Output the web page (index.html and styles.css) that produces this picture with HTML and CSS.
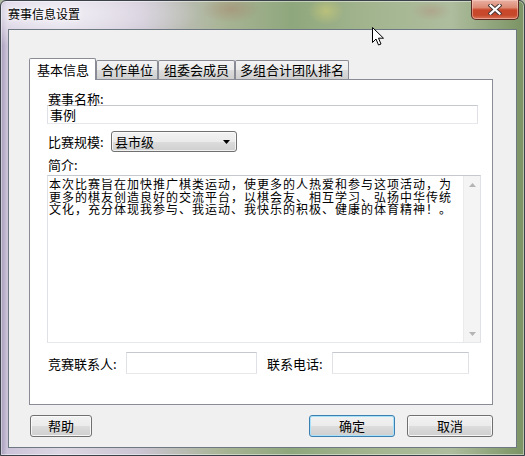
FILE: index.html
```html
<!DOCTYPE html>
<html lang="zh-CN">
<head>
<meta charset="utf-8">
<title>赛事信息设置</title>
<link rel="stylesheet" href="styles.css">
</head>
<body>
<div class="window">
  <div class="titlebar">
    <span class="title">赛事信息设置</span>
    <div class="close-btn">
      <svg width="14" height="11" viewBox="0 0 14 11">
        <path d="M2.5 1.5 L11.5 9.5 M11.5 1.5 L2.5 9.5" stroke="#4b3a36" stroke-width="4.2" stroke-linecap="square" fill="none"/>
        <path d="M2.5 1.5 L11.5 9.5 M11.5 1.5 L2.5 9.5" stroke="#ffffff" stroke-width="2.2" stroke-linecap="square" fill="none"/>
      </svg>
    </div>
  </div>
  <div class="client">
    <div class="tabs">
      <div class="tab active">基本信息</div>
      <div class="tab">合作单位</div>
      <div class="tab tab-mid">组委会成员</div>
      <div class="tab">多组合计团队排名</div>
    </div>
    <div class="panel">
      <div class="label first-label">赛事名称:</div>
      <div class="textbox name-box">事例</div>
      <div class="scale-row">
        <span class="scale-label">比赛规模:</span>
        <div class="combo">
          <span class="combo-text">县市级</span>
          <svg class="combo-arrow" width="7" height="4" viewBox="0 0 7 4"><path d="M0 0 H7 L3.5 4 Z" fill="#000"/></svg>
        </div>
      </div>
      <div class="label intro-label">简介:</div>
      <div class="memo">
        <div class="memo-text">
          <div>本次比赛旨在加快推广棋类运动，使更多的人热爱和参与这项活动，为</div>
          <div>更多的棋友创造良好的交流平台，以棋会友、相互学习、弘扬中华传统</div>
          <div>文化，充分体现我参与、我运动、我快乐的积极、健康的体育精神！。</div>
        </div>
        <div class="vscroll">
          <div class="sb-btn"><svg width="7" height="4" viewBox="0 0 7 4"><path d="M0 4 H7 L3.5 0 Z" fill="#b4b4b4"/></svg></div>
          <div class="sb-track"></div>
          <div class="sb-btn"><svg width="7" height="4" viewBox="0 0 7 4"><path d="M0 0 H7 L3.5 4 Z" fill="#b4b4b4"/></svg></div>
        </div>
      </div>
      <div class="contact-row">
        <span class="contact-label">竞赛联系人:</span>
        <div class="textbox contact-box"></div>
        <span class="phone-label">联系电话:</span>
        <div class="textbox phone-box"></div>
      </div>
    </div>
    <div class="buttons">
      <div class="btn help-btn">帮助</div>
      <div class="btn ok-btn">确定</div>
      <div class="btn cancel-btn">取消</div>
    </div>
  </div>
  <svg class="cursor" width="13" height="20" viewBox="0 0 13 20">
    <path d="M0.5 0.5 L0.5 15.5 L4 12 L6.5 18 L9 17 L6.5 11.2 L11.5 11.2 Z" fill="#ffffff" stroke="#000000" stroke-width="1" stroke-linejoin="miter"/>
  </svg>
</div>
</body>
</html>
```
FILE: styles.css
```css
* {
  box-sizing: border-box;
}

html,
body {
  margin: 0;
  padding: 0;
}

body {
  width: 525px;
  height: 456px;
  overflow: hidden;
  background: #aeb79f;
  font-family: "Noto Sans CJK SC", "Liberation Sans", sans-serif;
  font-size: 13px;
  color: #000;
}

.window {
  position: relative;
  width: 525px;
  height: 456px;
  border: 1px solid #3b4149;
  border-radius: 6px 6px 0 0;
  padding: 0 7px 7px;
  display: flex;
  flex-direction: column;
  box-shadow: inset 0 0 0 1px rgba(255, 255, 255, 0.45);
  background:
    radial-gradient(ellipse 150px 34px at 50px 12px, rgba(244, 241, 248, 0.95), rgba(244, 241, 248, 0) 100%),
    radial-gradient(ellipse 30px 14px at 230px 8px, rgba(170, 110, 90, 0.35), rgba(170, 110, 90, 0) 100%),
    radial-gradient(ellipse 18px 14px at 325px 10px, rgba(225, 215, 110, 0.45), rgba(225, 215, 110, 0) 100%),
    radial-gradient(ellipse 20px 10px at 430px 10px, rgba(180, 120, 110, 0.3), rgba(180, 120, 110, 0) 100%),
    linear-gradient(90deg, #a59cbb 0px, #cbc3d8 6px, #dcd7e3 60px, #cbc4d2 140px, #a9b596 220px, #8fa77d 290px, #a3b58f 370px, #aebd9e 450px, #7e9667 518px);
}

.titlebar {
  height: 28px;
  display: flex;
  align-items: flex-start;
}

.title {
  font-size: 12px;
  line-height: 12px;
  margin-top: 7px;
  white-space: nowrap;
  color: #000;
  text-shadow: 0 0 6px rgba(255, 255, 255, 0.95), 0 0 3px rgba(255, 255, 255, 0.9);
}

.close-btn {
  margin-left: auto;
  margin-right: -2px;
  margin-top: -1px;
  width: 48px;
  height: 20px;
  border: 1px solid #5b2a22;
  border-top: none;
  border-radius: 0 0 5px 5px;
  background: linear-gradient(#eab1a3 0%, #dc8a74 40%, #c9472a 52%, #c6482a 80%, #d9775a 100%);
  box-shadow: inset 0 0 0 1px rgba(255, 220, 210, 0.45);
  display: flex;
  align-items: center;
  justify-content: center;
}

.client {
  height: 419px;
  border: 1px solid #6d7882;
  background: #f0f0f0;
  padding: 28px 22px 0 20px;
}

.tabs {
  display: flex;
  align-items: flex-end;
  height: 21px;
}

.tab {
  height: 19px;
  padding: 0 4px;
  border: 1px solid #898c95;
  border-bottom: none;
  border-radius: 2px 2px 0 0;
  background: linear-gradient(#f3f3f3 0%, #ebebeb 50%, #dddddd 50%, #cfcfcf 100%);
  line-height: 18px;
  white-space: nowrap;
}

.tab-mid {
  padding: 0 5px;
}

.tab.active {
  height: 22px;
  margin-bottom: -1px;
  padding: 0 6px 0 7px;
  background: #ffffff;
  line-height: 21px;
  position: relative;
  z-index: 1;
}

.panel {
  width: 464px;
  height: 326px;
  border: 1px solid #898c95;
  background: #ffffff;
  padding: 0 0 0 17px;
}

.label {
  height: 13px;
  line-height: 13px;
  padding-left: 1px;
  white-space: nowrap;
}

.first-label {
  margin-top: 12px;
}

.textbox {
  height: 19px;
  border: 1px solid;
  border-color: #c5c8ce #dfe1e6 #e6e8ec #dfe1e6;
  background: #ffffff;
  padding-left: 2px;
  line-height: 17px;
}

.name-box {
  width: 431px;
}

.scale-row {
  margin-top: 7px;
  height: 21px;
  display: flex;
  align-items: center;
}

.scale-label {
  width: 64px;
  padding-left: 1px;
  white-space: nowrap;
}

.combo {
  width: 126px;
  height: 21px;
  border: 1px solid #707070;
  border-radius: 3px;
  background: linear-gradient(#f2f2f2 0%, #ebebeb 50%, #dddddd 50%, #cfcfcf 100%);
  box-shadow: inset 0 0 0 1px rgba(255, 255, 255, 0.7);
  display: flex;
  align-items: center;
  padding: 0 6px 0 3px;
}

.combo-text {
  flex: 1;
  line-height: 19px;
}

.combo-arrow {
  display: block;
}

.intro-label {
  margin-top: 6px;
}

.memo {
  margin-top: 4px;
  width: 434px;
  height: 168px;
  border: 1px solid;
  border-color: #c5c8ce #dfe1e6 #e6e8ec #dfe1e6;
  display: flex;
  background: #ffffff;
}

.memo-text {
  flex: 1;
  padding: 2px 0 0 1px;
  font-size: 12px;
  letter-spacing: 1px;
  line-height: 12.5px;
  white-space: nowrap;
  overflow: hidden;
}

.vscroll {
  width: 17px;
  display: flex;
  flex-direction: column;
  background: #f4f4f4;
  border-left: 1px solid #ebebeb;
}

.sb-btn {
  height: 17px;
  display: flex;
  align-items: center;
  justify-content: center;
}

.sb-btn svg {
  display: block;
}

.sb-track {
  flex: 1;
}

.contact-row {
  margin-top: 9px;
  height: 22px;
  display: flex;
  align-items: center;
}

.contact-label {
  width: 79px;
  padding-left: 1px;
  white-space: nowrap;
}

.contact-box {
  width: 131px;
  height: 22px;
}

.phone-label {
  width: 65px;
  margin-left: 10px;
  white-space: nowrap;
}

.phone-box {
  width: 137px;
  height: 22px;
}

.buttons {
  width: 464px;
  margin-top: 10px;
  padding-left: 1px;
  display: flex;
}

.btn {
  height: 22px;
  border: 1px solid #707070;
  border-radius: 3px;
  background: linear-gradient(#f2f2f2 0%, #ebebeb 50%, #dddddd 50%, #cfcfcf 100%);
  box-shadow: inset 0 0 0 1px rgba(252, 252, 252, 0.85);
  text-align: center;
  line-height: 20px;
}

.help-btn {
  width: 62px;
}

.ok-btn {
  width: 86px;
  margin-left: auto;
  border-color: #3c7fb1;
  box-shadow: inset 0 0 0 1px #a9e2f8;
}

.cancel-btn {
  width: 86px;
  margin-left: 12px;
}

.cursor {
  position: absolute;
  left: 371px;
  top: 26px;
  display: block;
}
```
